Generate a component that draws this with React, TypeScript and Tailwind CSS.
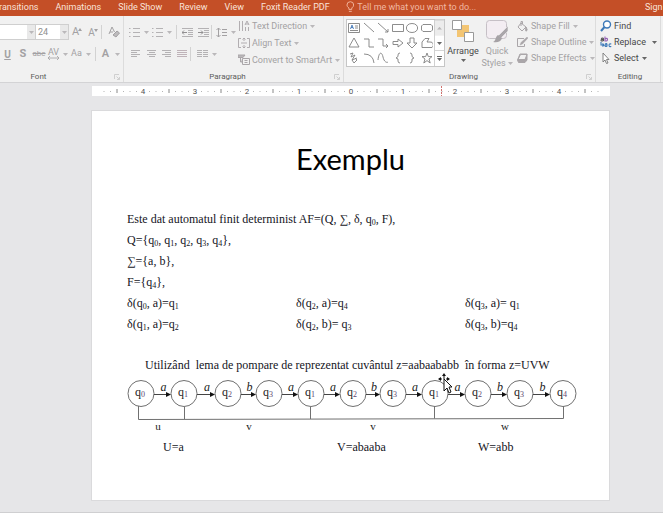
import React from "react";

type Kids = { children: React.ReactNode };

function Chevron({ dark = false }: { dark?: boolean }) {
  return (
    <svg width="5" height="3" viewBox="0 0 5 3" className={dark ? "shrink-0 fill-[#666]" : "shrink-0 fill-[#bab8ba]"} aria-hidden="true">
      <path d="M0 0h5L2.500 3z" />
    </svg>
  );
}

function Separator() {
  return <span className="h-3.5 w-px shrink-0 bg-[#d2d2d2]" />;
}

function Tool({ label, className, children }: Kids & { label: string; className: string }) {
  return (
    <button type="button" aria-label={label} className={`flex h-4 shrink-0 items-center justify-center gap-1 text-[#a3a1a3] ${className}`}>
      {children}
    </button>
  );
}

function Lines({ rows, color = "#b4b2b4" }: { rows: [number, number][]; color?: string }) {
  return (
    <svg width="11" height="11" viewBox="0 0 11 11" stroke={color} aria-hidden="true">
      {rows.map(([a, b], i) => (
        <path key={i} d={`M${a} ${i * 2 + 1.5}H${b}`} />
      ))}
    </svg>
  );
}

function Group({ name, className, launcher = true, children }: Kids & { name: string; className: string; launcher?: boolean }) {
  return (
    <section aria-label={name} className={`relative flex h-full shrink-0 flex-col border-r border-[#dcdcdc] ${className}`}>
      <div className="flex h-14 w-full">{children}</div>
      <div className="flex h-[10px] items-center justify-center text-[8px] leading-[10px] text-[#5c5c5c]">{name}</div>
      {launcher && (
        <button type="button" aria-label={`${name} settings`} className="absolute right-[3px] bottom-[2px]">
          <svg width="6" height="6" viewBox="0 0 6 6" fill="none" stroke="#cfcfcf" aria-hidden="true">
            <path d="M.5 5V.5H5M2.500 2.500l3 3M5.500 3v2.500H3" />
          </svg>
        </button>
      )}
    </section>
  );
}

function Labelled({ text, icon, arrow = true, active = false, spread = false }: { text: string; icon: React.ReactNode; arrow?: boolean; active?: boolean; spread?: boolean }) {
  return (
    <button type="button" className={`flex h-4 items-center text-[9px] leading-4 whitespace-nowrap ${active ? "text-[#484848]" : "text-[#a3a1a3]"}`}>
      <span className="flex w-[14px] shrink-0">{icon}</span>
      <span className={spread ? "mr-1.5" : "mr-[3px]"}>{text}</span>
      {arrow && <Chevron dark={active} />}
    </button>
  );
}

function FontGroup() {
  return (
    <Group name="Font" className="w-[124px] [&>div:nth-child(2)]:pr-[46px]">
      <div className="flex w-full flex-col pt-2">
        <div className="flex h-4 items-center">
          <div className="relative h-4 w-9">
            <select aria-label="Font name" className="block h-4 w-full appearance-none border border-l-0 border-[#cfcfcf] bg-white">
              <option></option>
            </select>
            <span className="pointer-events-none absolute top-px right-px flex h-3.5 w-2 items-center justify-center bg-[#e9e9e9]"><Chevron /></span>
          </div>
          <div className="relative h-4 w-[33px]">
            <select aria-label="Font size" className="block h-4 w-full appearance-none border border-l-0 border-[#cfcfcf] bg-white pl-0.5 text-[9px] leading-[14px] text-[#8f8f8f]">
              <option>24</option>
            </select>
            <span className="pointer-events-none absolute top-px right-px flex h-3.5 w-2 items-center justify-center bg-[#e9e9e9]"><Chevron /></span>
          </div>
          <Tool label="Increase font size" className="w-4 text-[11px]">
            <span className="flex">A<svg width="4" height="3" viewBox="0 0 4 3" className="mt-1 -ml-px" fill="currentColor"><path d="M0 3l2-3 2 3z" /></svg></span>
          </Tool>
          <Tool label="Decrease font size" className="w-4 text-[10px]">
            <span className="flex">A<svg width="4" height="3" viewBox="0 0 4 3" className="mt-1 -ml-px" fill="currentColor"><path d="M0 0l2 3 2-3z" /></svg></span>
          </Tool>
          <Separator />
          <Tool label="Clear formatting" className="ml-1 w-4">
            <svg width="12" height="12" viewBox="0 0 12 12" fill="none" stroke="currentColor">
              <path d="M1 8l3-7 2.500 5M2 6h3" />
              <path d="M5 9l4-4 2.500 2L8 11z" fill="#bdbbbd" />
            </svg>
          </Tool>
        </div>
        <div className="mt-1.5 flex h-4 items-center">
          <Tool label="Underline" className="w-[15px] text-[10px] font-bold underline">U</Tool>
          <Tool label="Shadow" className="w-4 text-[11px] font-bold">S</Tool>
          <Tool label="Strikethrough" className="w-4 text-[8px] line-through">abc</Tool>
          <Tool label="Character spacing" className="w-[22px] text-[9px]">
            <span className="flex flex-col items-center leading-[8px]">AV
              <svg width="11" height="4" viewBox="0 0 11 4" fill="none" stroke="currentColor"><path d="M0 2h11M2 0L0 2l2 2M9 0l2 2-2 2" strokeWidth=".8" /></svg>
            </span>
            <Chevron />
          </Tool>
          <Tool label="Change case" className="w-6 text-[9px]">Aa<Chevron /></Tool>
          <span className="ml-0.5 flex"><Separator /></span>
          <Tool label="Font color" className="ml-1 w-[22px] text-[11px] font-semibold">A<span className="ml-0.5 flex"><Chevron /></span></Tool>
        </div>
      </div>
    </Group>
  );
}

function Bullets() {
  return (
    <svg width="11" height="11" viewBox="0 0 11 11" stroke="#b4b2b4" aria-hidden="true">
      <path d="M0 1.500h1.500M4 1.500h7M0 5.500h1.500M4 5.500h7M0 9.500h1.500M4 9.500h7" />
    </svg>
  );
}

function Indent({ inward }: { inward: boolean }) {
  return (
    <svg width="11" height="11" viewBox="0 0 11 11" fill="none" stroke="#b4b2b4" aria-hidden="true">
      <path d="M0 1.500h11M6 3.500h5M6 5.500h5M6 7.500h5M0 9.500h11" />
      <path d={inward ? "M0 5.500h5M3 3.500l2 2-2 2" : "M5 5.500H0M2 3.500l-2 2 2 2"} stroke="#918f91" />
    </svg>
  );
}

function ParagraphGroup() {
  return (
    <Group name="Paragraph" className="w-[220px] [&>div:nth-child(2)]:pr-[12px]">
      <div className="flex w-[114px] shrink-0 flex-col pt-2 pl-[3px]">
        <div className="flex h-4 items-center">
          <Tool label="Bullets" className="w-[23px]"><Bullets /><Chevron /></Tool>
          <Tool label="Numbering" className="w-6"><Bullets /><Chevron /></Tool>
          <span className="ml-0.5 flex"><Separator /></span>
          <Tool label="Decrease indent" className="ml-0.5 w-4"><Indent inward={false} /></Tool>
          <Tool label="Increase indent" className="w-4"><Indent inward /></Tool>
          <Separator />
          <Tool label="Line spacing" className="ml-0.5 w-6">
            <svg width="11" height="11" viewBox="0 0 11 11" fill="none" stroke="currentColor">
              <path d="M2.500 1v9M.5 3l2-2 2 2M.5 8l2 2 2-2M6 2.500h5M6 5.500h5M6 8.500h5" />
            </svg>
            <Chevron />
          </Tool>
        </div>
        <div className="mt-1.5 flex h-4 items-center">
          <Tool label="Align left" className="w-4"><Lines rows={[[1, 10], [1, 7], [1, 10], [1, 7]]} /></Tool>
          <Tool label="Center" className="w-4"><Lines rows={[[1, 10], [3, 9], [1, 10], [3, 9]]} /></Tool>
          <Tool label="Align right" className="w-[15px]"><Lines rows={[[1, 10], [4, 10], [1, 10], [4, 10]]} /></Tool>
          <Tool label="Justify" className="w-4"><Lines rows={[[0, 10], [0, 10], [0, 10], [0, 10]]} color="#bfb3b9" /></Tool>
          <span className="flex"><Separator /></span>
          <Tool label="Columns" className="ml-1 w-6">
            <svg width="11" height="11" viewBox="0 0 11 11" stroke="#b4b2b4"><path d="M0 1.500h5M6 1.500h5M0 3.500h5M6 3.500h5M0 5.500h5M6 5.500h5M0 7.500h5M6 7.500h5" /></svg>
            <Chevron />
          </Tool>
        </div>
      </div>
      <div className="flex flex-col gap-px pt-0.5">
        <Labelled text="Text Direction" icon={
          <svg width="12" height="12" viewBox="0 0 12 12" fill="none" stroke="#aaa6a9"><path d="M1.500 1v10M4.500 1v10M7 5l2-4 2 4M7.500 4h3M7.500 7v4M10.500 7v4" strokeWidth=".9" /></svg>} />
        <Labelled text="Align Text" icon={
          <svg width="12" height="12" viewBox="0 0 12 12" fill="none" stroke="#aaa6a9"><path d="M3 1.500H.5v9H3M9 1.500h2.500v9H9M3 6h6M6 1v3M4.500 2.500L6 1l1.500 1.500M6 11V8M4.500 9.500L6 11l1.500-1.500" strokeWidth=".9" /></svg>} />
        <Labelled text="Convert to SmartArt" icon={
          <svg width="12" height="12" viewBox="0 0 12 12" fill="none" stroke="#aaa6a9"><path d="M0 1h7L5 3.500H0zM2.500 3v5H4" fill="#bbb8ba" /><path d="M4.500 4.500h7v6h-7zM6.500 6.500h3M6.500 8.500h3" /></svg>} />
      </div>
    </Group>
  );
}

const shapes = [
  "M2 .5h0", "M1 1l10 9", "M1 1l10 9M11 7v3H8", "M.5 2.500h11v7H.5z", "M6 1.500c7.500 0 7.500 9 0 9s-7.500-9 0-9z", "M2 2.500h8l1.500 1.500v4L10 9.500H2L.5 8V4z",
  "M6 1L1 10h10z", "M1 2h5v8h5", "M1 2h5v7h5M9 7l2 2-2 2", "M1 4.500h5V2l5 4-5 4V7.500H1z", "M4 1h4v5h3l-5 5-5-5h3z", "M1 10.500V5l3-3.500h4L6 5h3a3 3 0 0 1 2 5.500z",
  "M2 2l3-1-2 4 4-2-3 5 5-2M4 8l2 3 3-3-2-2", "M1 2q9 0 10 9", "M1 8C2-1 5 0 6 5s4 6 5 5", "M8 1q-2 0-2 2v1.500L4 6l2 1v2q0 2 2 2", "M4 1q2 0 2 2v1.500L8 6 6 7v2q0 2-2 2", "M6 1l1.300 3.600H11L8 7l1.200 4L6 8.600 2.800 11 4 7 1 4.600h3.700z",
];

function DrawingGroup() {
  return (
    <Group name="Drawing" className="w-[252px] pl-[2px] [&>div:nth-child(2)]:pr-[14px]">
      <div className="mt-[3px] flex h-12 w-[99px] shrink-0 border border-[#c6c6c6] bg-white">
        <div className="grid flex-1 grid-cols-6 place-items-center py-px">
          {shapes.map((d, i) => (
            <button type="button" key={i} aria-label={`Shape ${i + 1}`}>
              <svg width="12" height="12" viewBox="0 0 12 12" fill="none" stroke="#808080" strokeWidth=".9" className="block">
                {i === 0 ? (
                  <>
                    <path d="M.5 1.500h11v9H.5zM7 4h3M7 6h3M2 8.500h8" />
                    <path d="M2.500 7l1.500-4 1.500 4M3 5.500h2" stroke="#4579b8" />
                  </>
                ) : (
                  <path d={d} />
                )}
              </svg>
            </button>
          ))}
        </div>
        <div className="flex w-[10px] flex-col divide-y divide-[#d4d4d4] border-l border-[#d0d0d0]">
          <button type="button" aria-label="Previous shapes" className="flex flex-1 rotate-180 items-center justify-center bg-[#ececec]"><Chevron /></button>
          <button type="button" aria-label="Next shapes" className="flex flex-1 items-center justify-center"><Chevron dark /></button>
          <button type="button" aria-label="More shapes" className="flex flex-1 flex-col items-center justify-center gap-px"><span className="h-px w-[5px] bg-[#666]" /><Chevron dark /></button>
        </div>
      </div>
      <button type="button" className="flex w-9 shrink-0 flex-col items-center pt-1 text-[9px] leading-3 text-[#484848]">
        <svg width="22" height="22" viewBox="0 0 22 22" className="shrink-0">
          <path d="M5 5h12v12H5z" fill="#f3c573" />
          <path d="M.5.5h9v9h-9zM12.500 12.500h9v9h-9z" fill="#fff" stroke="#999" />
        </svg>
        <span className="mt-[3px] mb-0.5">Arrange</span>
        <Chevron dark />
      </button>
      <button type="button" className="flex w-8 shrink-0 flex-col items-center pt-1 text-[9px] leading-3 text-[#a3a1a3]">
        <svg width="24" height="24" viewBox="0 0 24 24" className="shrink-0">
          <rect x="1.500" y=".5" width="20" height="18" rx="3" fill="#f3edf2" stroke="#c6c0c6" />
          <path d="M23 6v5l-7 7-3-2z" fill="#aaa6aa" stroke="#f1f1f1" strokeWidth=".6" />
          <path d="M13 15l4 3c-1 4-5 5-9 4 3-1 2-5 5-7z" fill="#a6a2a6" />
        </svg>
        <span className="mt-px">Quick</span>
        <span className="flex items-center gap-0.5">Styles<Chevron /></span>
      </button>
      <div className="flex flex-col pt-0.5 pl-1">
        <Labelled text="Shape Fill" icon={
          <svg width="11" height="11" viewBox="0 0 11 11" fill="none" stroke="#aaa6a9"><path d="M4 2l5 4-4 4-4-4zM4 5V.5h1.500V3" /><path d="M9 6q2 3 .5 4T9 6z" fill="#aaa6a9" /></svg>} />
        <Labelled text="Shape Outline" icon={
          <svg width="11" height="11" viewBox="0 0 11 11" fill="none" stroke="#aaa6a9"><path d="M7 1.500H.5v8h7V7" /><path d="M3 8l1-2.500L10 0l1 1-5.500 6z" fill="#aaa6a9" strokeWidth=".4" /></svg>} />
        <Labelled text="Shape Effects" icon={
          <svg width="11" height="11" viewBox="0 0 11 11" fill="#f1f1f1" stroke="#aaa6a9"><path d="M3 1h7v6L8 9.500H1.500L.5 7z" fill="#aaa6a9" /><path d="M3.500 1.500H10L8 6.500H1z" /></svg>} />
      </div>
    </Group>
  );
}

function EditingGroup() {
  return (
    <Group name="Editing" className="w-[65px] pl-1" launcher={false}>
      <div className="flex flex-col pt-0.5">
        <Labelled active arrow={false} text="Find" icon={
          <svg width="12" height="12" viewBox="0 0 12 12" fill="#fff" stroke="#3d79b8" strokeWidth="1.400"><circle cx="7" cy="4.500" r="3.500" /><path d="M4.500 7L1 11" strokeWidth="2" /></svg>} />
        <Labelled active spread text="Replace" icon={
          <svg width="12" height="12" viewBox="0 0 12 12" fill="none" strokeWidth="1.100" aria-hidden="true">
            <path d="M1 2.500q2.500-1 2.500.5v2M3.500 3.500Q1 3 1 4.300T3.500 4.500" stroke="#555" />
            <path d="M5 .5v5M5 3q2.500-1.500 2.500.5T5 4.800" stroke="#9460b5" />
            <path d="M5 8q2-1 2 .5v2M7 9q-2-.3-2 .8t2 .4M11.300 8Q9 7.500 9 9.300t2.300 1.200M1 6v3h2.500M2.500 7.500L4 9l-1.500 1.500" stroke="#3d79b8" />
          </svg>} />
        <Labelled active text="Select" icon={
          <svg width="12" height="12" viewBox="0 0 12 12" fill="#fff" stroke="#777" strokeWidth=".9"><path d="M3 1v9l2-2 1.500 3.500L8 11 6.500 7.500H9z" /></svg>} />
      </div>
    </Group>
  );
}

function Ruler() {
  const steps = Array.from({ length: 77 }, (_, i) => i - 38);
  return (
    <div className="mt-[3px] mr-[53px] ml-[92px] flex h-[10px] justify-center overflow-hidden bg-white">
      <svg width="518" height="10" viewBox="-259 0 518 10" className="shrink-0" fontFamily="Roboto, sans-serif" fontSize="8" textAnchor="middle" fill="#555">
        {steps.map((s) => {
          if (s % 8 === 0) return <text key={s} x={s * 6.5} y="8">{Math.abs(s / 8)}</text>;
          if (s % 4 === 0) return <path key={s} d={`M${s * 6.5} 3v4`} stroke="#888" />;
          return <rect key={s} x={s * 6.5 - 0.5} y="5" width="1" height="1" fill="#b4b4b4" />;
        })}
        <path d="M90.500 0v10" stroke="#d0706c" strokeDasharray="2 1" />
      </svg>
    </div>
  );
}

function Q({ n }: { n: number }) {
  return <>q<sub className="bottom-[-2px] text-[8px]">{n}</sub></>;
}

const states: [number, number][] = [[141, 0], [184, 1], [228, 2], [269, 3], [311, 1], [353, 2], [393, 3], [435, 1], [478, 2], [520, 3], [563, 4]];
const word = "aabaababb";
const edges = ["a", "a", "b", "a", "a", "b", "a", "a", "b", "b"];
const parts: [number, string][] = [[158, "u"], [249, "v"], [373, "v"], [505, "w"]];

function Automaton() {
  return (
    <svg width="455" height="59" viewBox="125 378 455 59" className="-ml-0.5 block" role="img" aria-label={`Automaton path for ${word}`} fontFamily="Liberation Serif, serif" fill="#222">
      <g fill="none" stroke="#707070">
        {states.map(([x], i) => <circle key={i} cx={x} cy="393.500" r="13" />)}
        <path d="M138.500 406v13.500L563.500 418.500V406M184.500 407v12M310.500 407v12M434.500 406v12.500" />
      </g>
      {states.map(([x, n], i) => (
        <text key={i} x={x - 6} y="396" fontSize="12">q<tspan fontSize="8" dy="1" fill="#5b4670">{n}</tspan></text>
      ))}
      {edges.map((e, i) => {
        const from = states[i][0] + 13;
        const to = states[i + 1][0] - 13;
        return (
          <g key={i}>
            <path d={`M${from} 394.500H${to - 3}`} stroke="#444" />
            <path d={`M${to} 394.500l-5-2.500v5z`} fill="#111" />
            <text x={(from + to) / 2 + 1} y="391" fontSize="12" fontStyle="italic" textAnchor="middle">{e}</text>
          </g>
        );
      })}
      {parts.map(([x, t], i) => <text key={i} x={x} y="430" fontSize="11" textAnchor="middle">{t}</text>)}
    </svg>
  );
}

function Slide() {
  return (
    <article className="relative mt-[14px] mr-[53px] ml-[91px] border border-[#dadadc] bg-white px-[35px] pt-7 pb-[42px] font-['Liberation_Serif',serif] text-[12px] leading-[21px] text-[#14141c]">
      <h1 className="text-center font-['Lato',sans-serif] text-[29px] leading-10 text-black">Exemplu</h1>
      <div className="mt-[30px]">
        <p>Este dat automatul finit determinist AF=(Q, ∑, δ, <Q n={0} />, F),</p>
        <p>Q={"{"}<Q n={0} />, <Q n={1} />, <Q n={2} />, <Q n={3} />, <Q n={4} />{"}"},</p>
        <p>∑={"{"}a, b{"}"},</p>
        <p>F={"{"}<Q n={4} />{"}"},</p>
      </div>
      <div className="grid grid-cols-[169px_169px_1fr]">
        <p>δ(<Q n={0} />, a)=<Q n={1} /></p>
        <p>δ(<Q n={2} />, a)=<Q n={4} /></p>
        <p>δ(<Q n={3} />, a)= <Q n={1} /></p>
        <p>δ(<Q n={1} />, a)=<Q n={2} /></p>
        <p>δ(<Q n={2} />, b)= <Q n={3} /></p>
        <p>δ(<Q n={3} />, b)=<Q n={4} /></p>
      </div>
      <p className="mt-5 ml-[18px] whitespace-pre">Utilizând  lema de pompare de reprezentat cuvântul z=aabaababb  în forma z=UVW</p>
      <div className="mt-0.5"><Automaton /></div>
      <div className="flex pl-9">
        <p className="w-[174px]">U=a</p>
        <p className="w-[141px]">V=abaaba</p>
        <p>W=abb</p>
      </div>
      <svg width="18" height="22" viewBox="0 0 18 22" className="absolute top-[262px] left-[345px]" aria-hidden="true">
        <path d="M7 0l2 3H5zM1 6l3-2v4zM13 6l-3-2v4z" fill="#111" />
        <path d="M7 2v4M2 6h3M9 6h3" stroke="#111" />
        <path d="M7 6v12l3-3 2 5 2-1-2-5h3z" fill="#fff" stroke="#111" />
      </svg>
    </article>
  );
}

const tabs = ["Transitions", "Animations", "Slide Show", "Review", "View", "Foxit Reader PDF"];

export default function App() {
  return (
    <div className="flex min-h-screen flex-col overflow-hidden bg-[#e6e6e8] font-['Roboto',sans-serif]">
      <header className="flex h-4 items-center overflow-hidden bg-[#c44f27] text-[9px] leading-4 whitespace-nowrap text-[#fae3da]">
        <nav className="-ml-1.5 flex gap-[17px]">
          {tabs.map((t) => <button type="button" key={t} className="-mt-0.5">{t}</button>)}
        </nav>
        <label className="-mt-0.5 ml-4 flex flex-1 items-center gap-[3px]">
          <svg width="9" height="12" viewBox="0 0 9 12" fill="none" stroke="#f3b59d" aria-hidden="true"><path d="M3 8.500V7Q1 5.500 1 4a3.500 3.500 0 0 1 7 0q0 1.500-2 3v1.500zM3 10.500h3" /></svg>
          <input type="text" aria-label="Tell me" placeholder="Tell me what you want to do..." className="h-4 w-full bg-transparent placeholder:text-[#f0b8a2]" />
        </label>
        <button type="button" className="-mt-0.5 w-[18px] shrink-0 text-left">Sign</button>
      </header>
      <div className="flex h-[67px] overflow-hidden border-b border-[#d3d3d5] bg-[#f1f1f1]">
        <FontGroup />
        <ParagraphGroup />
        <DrawingGroup />
        <EditingGroup />
      </div>
      <main className="flex-1 border-b border-[#cfcfd1]">
        <Ruler />
        <Slide />
      </main>
    </div>
  );
}
